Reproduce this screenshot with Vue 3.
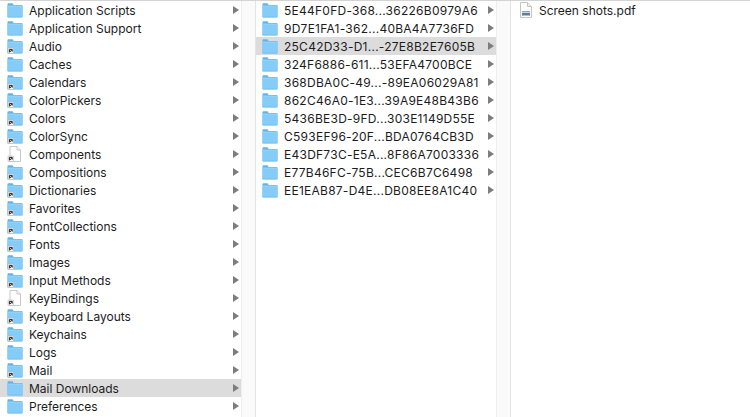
<script setup>
const leftRows = [
  { name: 'Application Scripts', icon: 'folder' },
  { name: 'Application Support', icon: 'folder' },
  { name: 'Audio', icon: 'alias' },
  { name: 'Caches', icon: 'folder' },
  { name: 'Calendars', icon: 'alias' },
  { name: 'ColorPickers', icon: 'alias' },
  { name: 'Colors', icon: 'alias' },
  { name: 'ColorSync', icon: 'alias' },
  { name: 'Components', icon: 'doc' },
  { name: 'Compositions', icon: 'alias' },
  { name: 'Dictionaries', icon: 'alias' },
  { name: 'Favorites', icon: 'alias' },
  { name: 'FontCollections', icon: 'alias' },
  { name: 'Fonts', icon: 'alias' },
  { name: 'Images', icon: 'alias' },
  { name: 'Input Methods', icon: 'alias' },
  { name: 'KeyBindings', icon: 'doc' },
  { name: 'Keyboard Layouts', icon: 'alias' },
  { name: 'Keychains', icon: 'alias' },
  { name: 'Logs', icon: 'folder' },
  { name: 'Mail', icon: 'alias' },
  { name: 'Mail Downloads', icon: 'folder', selected: true },
  { name: 'Preferences', icon: 'folder' },
]

const midRows = [
  { name: '5E44F0FD-368...36226B0979A6' },
  { name: '9D7E1FA1-362...40BA4A7736FD' },
  { name: '25C42D33-D1...-27E8B2E7605B', selected: true },
  { name: '324F6886-611...53EFA4700BCE' },
  { name: '368DBA0C-49...-89EA06029A81' },
  { name: '862C46A0-1E3...39A9E48B43B6' },
  { name: '5436BE3D-9FD...303E1149D55E' },
  { name: 'C593EF96-20F...BDA0764CB3D' },
  { name: 'E43DF73C-E5A...8F86A7003336' },
  { name: 'E77B46FC-75B...CEC6B7C6498' },
  { name: 'EE1EAB87-D4E...DB08EE8A1C40' },
]
</script>

<template>
  <div class="browser">
    <div class="col col-left">
      <div v-for="row in leftRows" :key="row.name" class="row" :class="{ selected: row.selected }">
        <svg v-if="row.icon === 'doc'" class="icon" viewBox="0 0 16 16">
          <path d="M3 .5h7l3.5 3.5v11.5H3z" fill="#fff" stroke="#c9c9c9" />
          <path d="M10 .5V4h3.5" fill="#f2f2f2" stroke="#c9c9c9" />
          <rect x="1" y="10" width="5.5" height="5.5" fill="#f6f6f6" stroke="#aaa" stroke-width=".5" />
          <path d="M2.4 14.4v-3h2.8v2.2M2.9 14l2-2.2" fill="none" stroke="#222" stroke-width="1" />
        </svg>
        <svg v-else class="icon" viewBox="0 0 16 16">
          <path d="M.5 2q0-.7.7-.7h4.3l1.2 1.6h8.1q.7 0 .7.7v10.9q0 .7-.7.7H1.2q-.7 0-.7-.7z" fill="#62b3ea" />
          <rect x=".5" y="3.8" width="15" height="11.4" rx=".6" fill="#85cdf8" />
          <path d="M.5 4.1h15" stroke="#a9dcfb" stroke-width=".6" />
          <path d="M.5 15.1h15" stroke="#5aaee6" stroke-width=".5" />
          <g v-if="row.icon === 'alias'">
            <rect x="1" y="10" width="5.5" height="5.5" fill="#f6f6f6" stroke="#aaa" stroke-width=".5" />
            <path d="M2.4 14.4v-3h2.8v2.2M2.9 14l2-2.2" fill="none" stroke="#222" stroke-width="1" />
          </g>
        </svg>
        <span class="name">{{ row.name }}</span>
        <span class="arrow"></span>
      </div>
    </div>
    <div class="col col-mid">
      <div v-for="row in midRows" :key="row.name" class="row" :class="{ selected: row.selected }">
        <svg class="icon" viewBox="0 0 16 16">
          <path d="M.5 2q0-.7.7-.7h4.3l1.2 1.6h8.1q.7 0 .7.7v10.9q0 .7-.7.7H1.2q-.7 0-.7-.7z" fill="#62b3ea" />
          <rect x=".5" y="3.8" width="15" height="11.4" rx=".6" fill="#85cdf8" />
          <path d="M.5 4.1h15" stroke="#a9dcfb" stroke-width=".6" />
          <path d="M.5 15.1h15" stroke="#5aaee6" stroke-width=".5" />
        </svg>
        <span class="name">{{ row.name }}</span>
        <span class="arrow"></span>
      </div>
    </div>
    <div class="col col-right">
      <div class="row">
        <svg class="icon" viewBox="0 0 16 16">
          <path d="M2.5.5h7l4 4v11h-11z" fill="#fff" stroke="#c4c4c4" />
          <path d="M9.5.5v4h4" fill="#eee" stroke="#c4c4c4" />
          <rect x="4" y="9" width="8" height="1.5" fill="#9aa7b5" />
          <rect x="4" y="11" width="8" height="2.5" fill="#5f7d9c" />
        </svg>
        <span class="name">Screen shots.pdf</span>
      </div>
    </div>
  </div>
</template>

<style scoped>
.browser {
  display: flex;
  width: 750px;
  height: 417px;
  overflow: hidden;
  box-sizing: border-box;
  border-top: 1px solid #d4d4d4;
  background: #fff;
  font-family: Inter, "Liberation Sans", Arial, sans-serif;
  font-size: 12px;
  color: #1c1c1c;
}

.col {
  box-sizing: border-box;
  height: 100%;
  flex: none;
}

.col-left {
  width: 256px;
  padding-right: 14px;
  border-right: 1px solid #e4e4e4;
  background: linear-gradient(to right, #fff 241px, #eee 241px, #eee 242px, #fafafa 242px);
}

.col-mid {
  width: 255px;
  padding-right: 14px;
  border-right: 1px solid #e4e4e4;
  background: linear-gradient(to right, #fff 240px, #eee 240px, #eee 241px, #fafafa 241px);
}

.col-right {
  flex: 1;
}

.row {
  display: flex;
  align-items: center;
  height: 18px;
  padding-left: 7px;
}

.col-mid .row {
  padding-left: 6px;
}

.col-mid .name {
  letter-spacing: 0.25px;
}

.selected {
  background: #dcdcdc;
}

.icon {
  flex: none;
  width: 16px;
  height: 16px;
  margin-right: 6px;
}

.col-right .icon {
  margin-right: 5px;
}

.name {
  flex: 1;
  white-space: nowrap;
}

.arrow {
  flex: none;
  width: 0;
  height: 0;
  margin-right: 2px;
  border-left: 6px solid #7d7d7d;
  border-top: 4px solid transparent;
  border-bottom: 4px solid transparent;
}
</style>
